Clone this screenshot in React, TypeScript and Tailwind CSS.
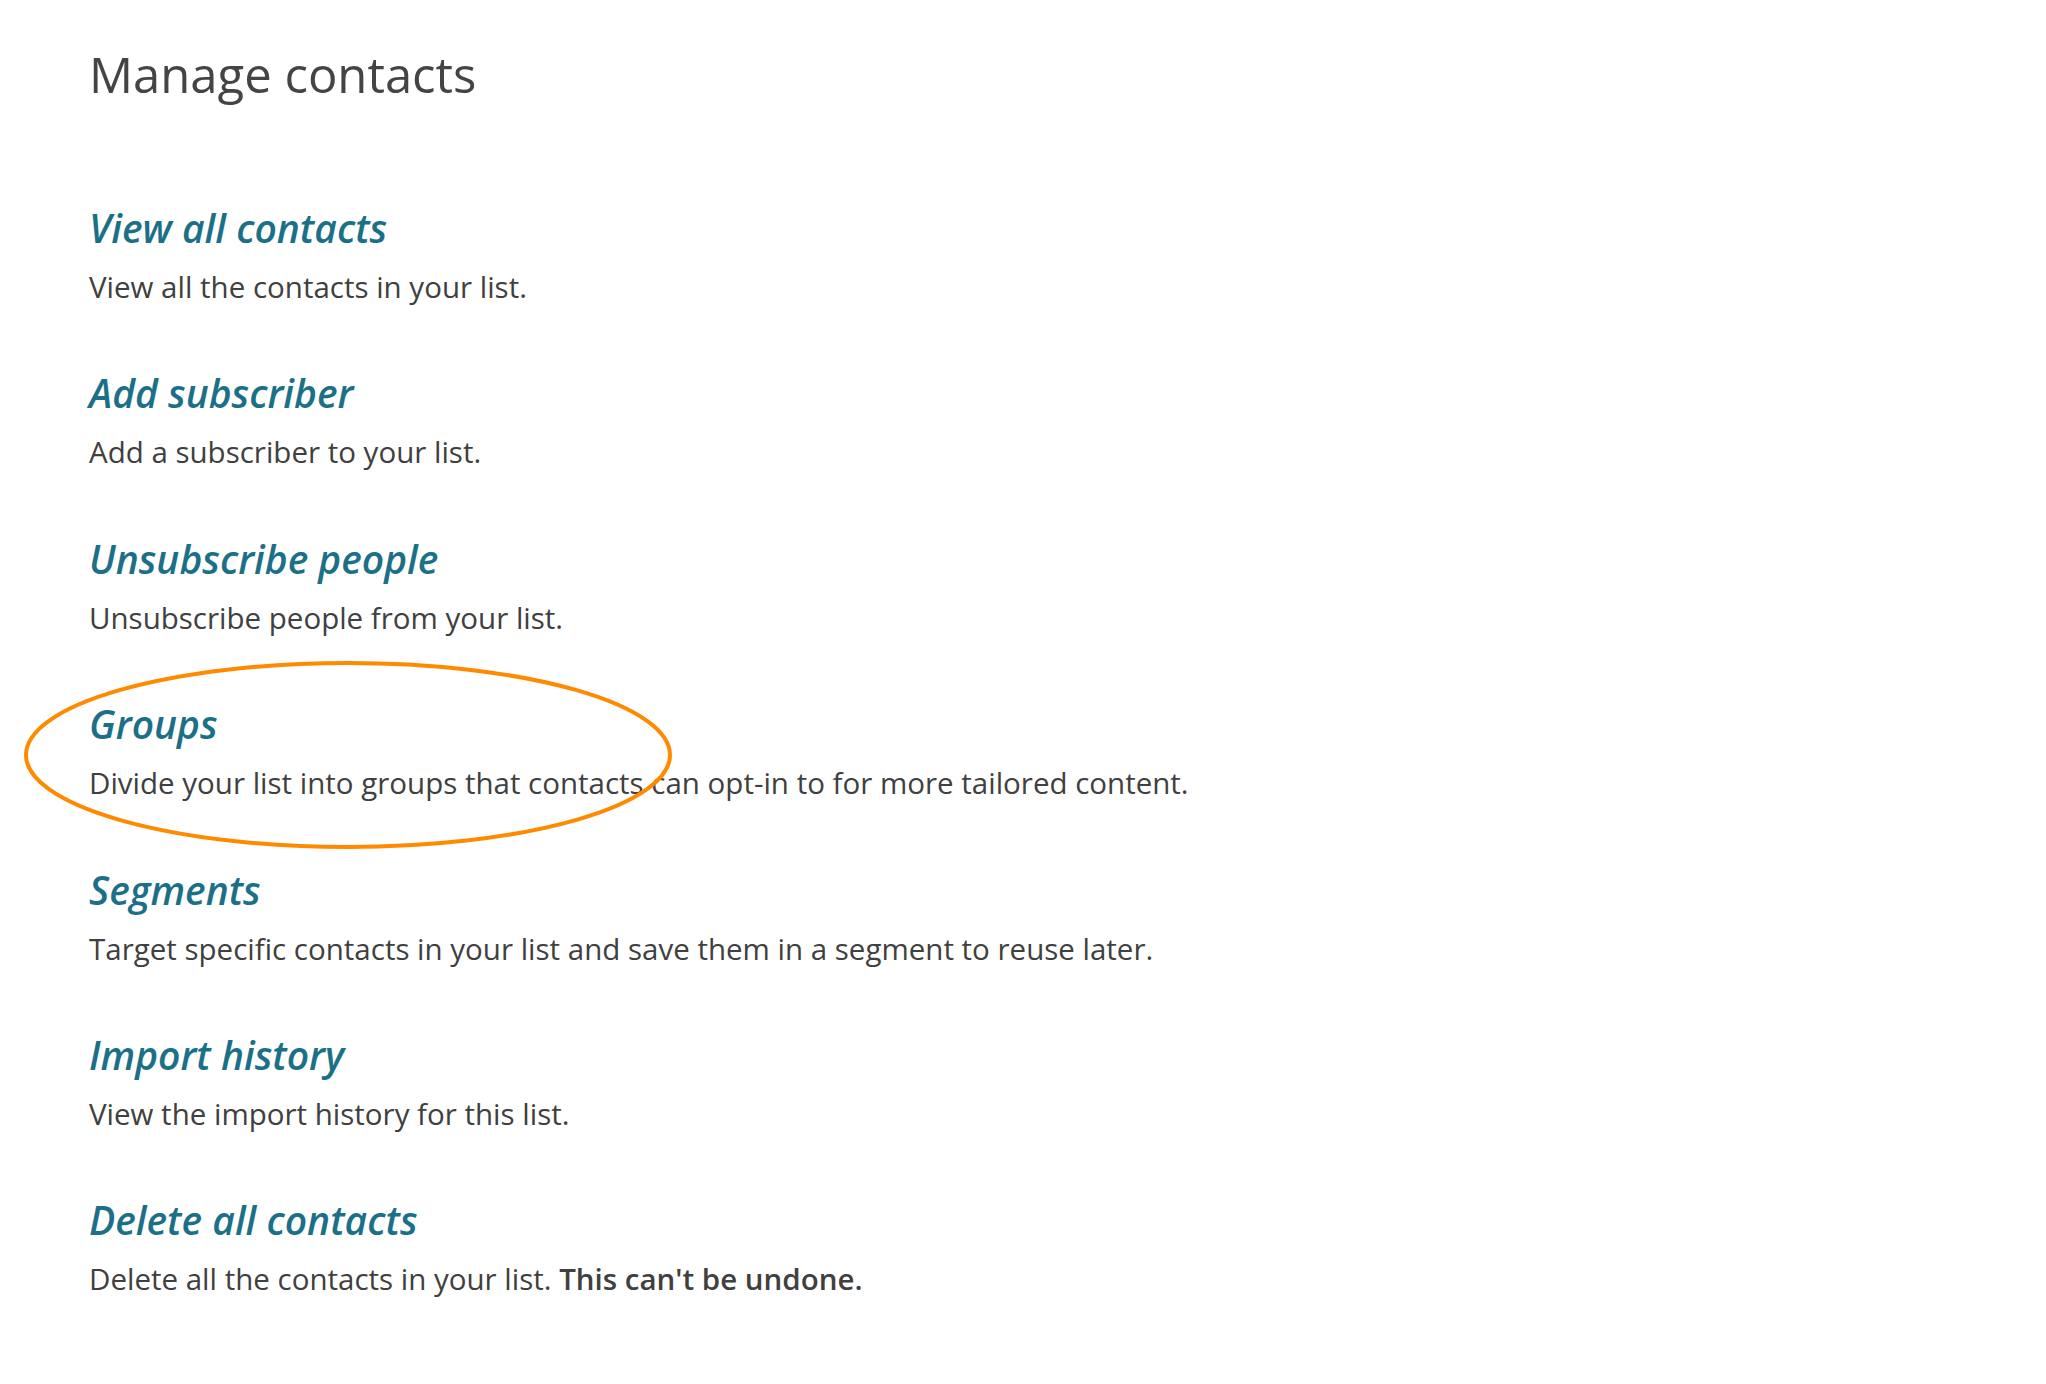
import React from "react";

const items: { title: string; desc: React.ReactNode }[] = [
  { title: "View all contacts", desc: "View all the contacts in your list." },
  { title: "Add subscriber", desc: "Add a subscriber to your list." },
  { title: "Unsubscribe people", desc: "Unsubscribe people from your list." },
  { title: "Groups", desc: "Divide your list into groups that contacts can opt-in to for more tailored content." },
  { title: "Segments", desc: "Target specific contacts in your list and save them in a segment to reuse later." },
  { title: "Import history", desc: "View the import history for this list." },
  {
    title: "Delete all contacts",
    desc: (
      <>
        Delete all the contacts in your list. <strong className="font-semibold">This can't be undone.</strong>
      </>
    ),
  },
];

export default function App() {
  return (
    <div
      className="relative w-[2046px] h-[1384px] bg-white pl-[89px] pt-[46px]"
      style={{ fontFamily: '"Open Sans", "Noto Sans", sans-serif' }}
    >
      <h1 className="text-[49px] leading-[56px] font-normal text-[#444444]">Manage contacts</h1>
      <div className="mt-[102px] flex flex-col gap-[62.4px]">
        {items.map((it) => (
          <div key={it.title} className="flex flex-col gap-[15px]">
            <a className="text-[39px] leading-[48px] italic font-semibold text-[#1b7088]">{it.title}</a>
            <p className="text-[29.5px] leading-[40px] text-[#404040]">{it.desc}</p>
          </div>
        ))}
      </div>
      <svg
        className="absolute left-0 top-0 pointer-events-none"
        width="2046"
        height="1384"
        viewBox="0 0 2046 1384"
      >
        <ellipse cx="348" cy="755" rx="322" ry="92" fill="none" stroke="#ff8a00" strokeWidth="4" />
      </svg>
    </div>
  );
}
